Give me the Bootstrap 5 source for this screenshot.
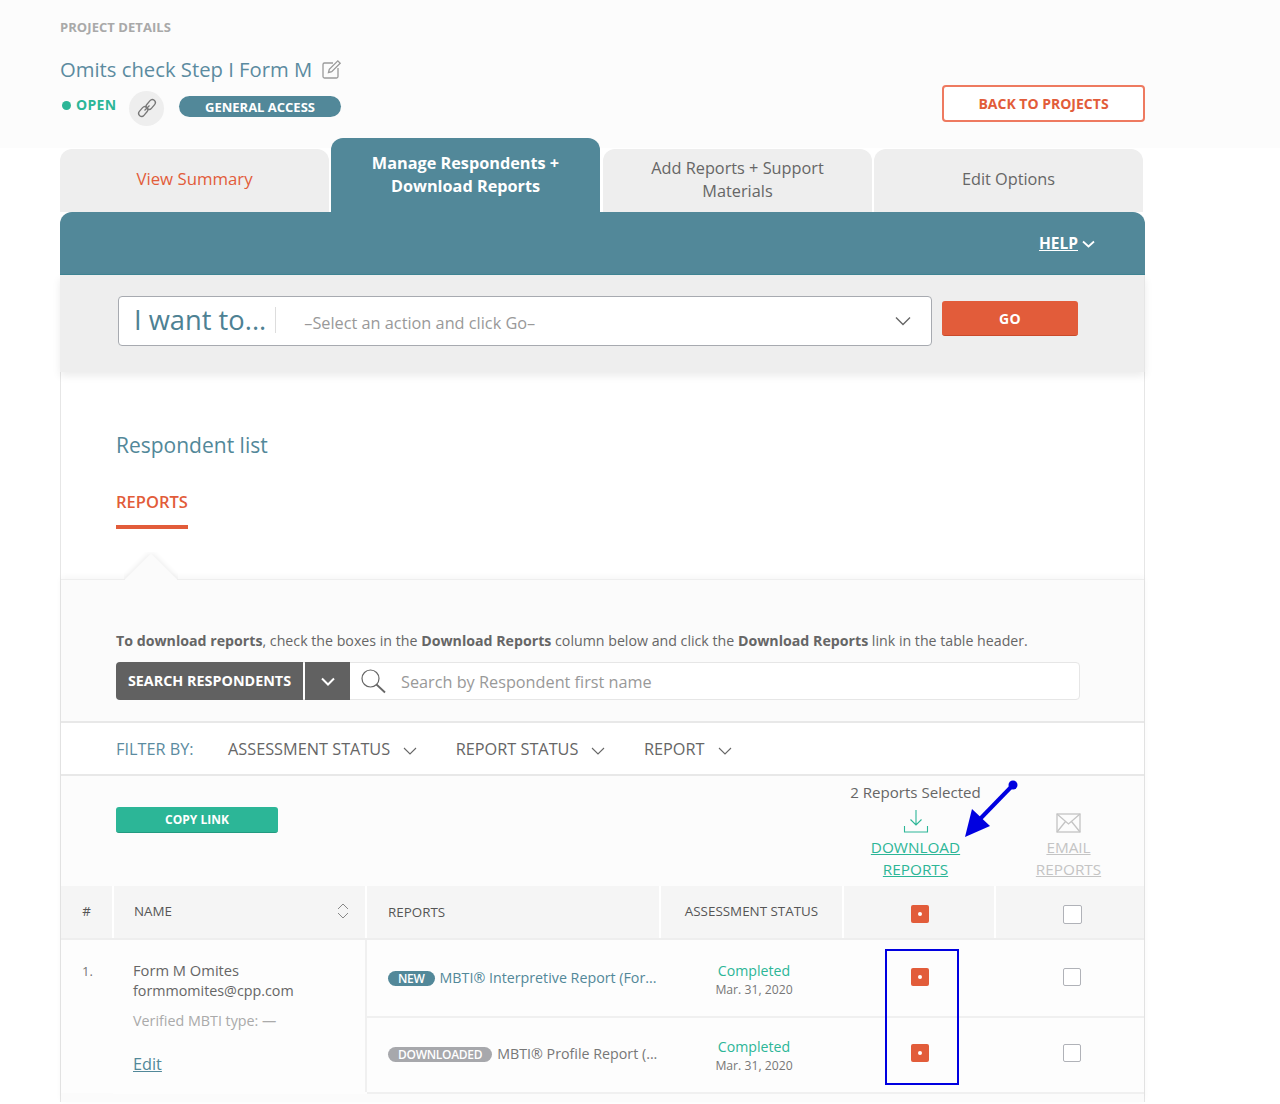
<!DOCTYPE html>
<html lang="en">
<head>
<meta charset="utf-8">
<title>Project details</title>
<link rel="stylesheet" href="https://cdn.jsdelivr.net/npm/bootstrap@5.3.0/dist/css/bootstrap.min.css">
<style>
html,body{height:1104px;overflow:hidden;background:#fff}
body{font-family:"Open Sans","Liberation Sans",sans-serif;color:#555;font-size:14px;position:relative}
.hdr{background:#fcfcfc;height:148px;padding:19px 135px 0 60px}
.eyebrow{font-size:13px;font-weight:700;color:#a9a9a9;line-height:16px;height:16px;margin:0;letter-spacing:.06px}
.ptitle{font-size:20.250px;font-weight:400;color:#5b8ba0;line-height:28px;margin:20px 0 0;height:28px}
.ptitle svg{margin-left:4px;vertical-align:-3px}
.statusrow{margin-top:7px;height:36px}
.open-dot{width:9px;height:9px;border-radius:50%;background:#2cb697;margin:0 5px 6px 2px}
.open-t{font-size:14px;font-weight:700;color:#2cb697;letter-spacing:.3px;line-height:1;margin:0 14px 6px 0;width:39px;white-space:nowrap}
.linkc{width:35px;height:35px;border-radius:50%;background:#eee;margin-right:15px}
.gen{width:162px;height:21px;border-radius:11px;background:#528899;color:#fff;font-size:13px;font-weight:700;line-height:22px;text-align:center;margin-bottom:4px}
.backbtn{width:203px;height:37px;border:2px solid #ee7a60;border-radius:4px;background:#fff;color:#e25c3a;font-size:14px;font-weight:700;line-height:33px;text-align:center;padding:0;margin-bottom:26px}
.wrapx{width:1085px;margin-left:60px;position:relative}
.tabsx{height:74px;margin-top:-10px;align-items:flex-end;gap:2px}
.tabx{width:269px;height:63px;background:#eee;border-radius:12px 12px 0 0;font-size:16.300px;line-height:23px;color:#666;text-align:center;padding:0 30px 2px}
.tabx.first{color:#e25c3a;font-size:16.800px;padding-bottom:4px}
.tabx.actv{height:74px;background:#528899;color:#fff;font-weight:700;padding:0 30px 1px;font-size:16.250px}
.tabx.third{margin-left:1px;width:269px}
.tealbar{height:63px;background:#528899;border-radius:12px 12px 0 0;border-bottom:1px solid #3f8594;padding:1px 50px 0 0}
.helpx{color:#fff;font-weight:700;font-size:15.500px;text-decoration:underline}
.actionbar{height:97px;background:#eee;padding:21px 0 0 58px;box-shadow:0 4px 8px rgba(0,0,0,.08);position:relative;gap:10px;border-right:1px solid #e6e6e6}
.wantbox{width:814px;height:50px;background:#fff;border:1px solid #a7aab0;border-radius:4px;padding:0 20px 0 15px}
.want{font-size:27.300px;color:#4d8193;line-height:26px;padding-right:9px;border-right:1px solid #ddd;height:26px;white-space:nowrap;margin-right:28px;margin-top:-2px}
.wantsel{font-size:16.300px;color:#999;flex:1;position:relative;top:2px}
.gobtn{width:136px;height:35px;margin-top:5px;background:#e25c3a;border:0;border-bottom:1px solid #c94a2a;border-radius:3px;color:#fff;font-weight:700;font-size:14px;letter-spacing:.3px;padding:0}
.panel{border-left:1px solid #e6e6e6;border-right:1px solid #e6e6e6;background:#fff;height:730px}
.toppane{height:207px;padding:59px 0 0 55px}
.rlist{font-size:21px;font-weight:400;color:#528899;line-height:28px;margin:0}
.subtab{display:inline-block;color:#e25c3a;font-weight:600;font-size:16.500px;line-height:20px;margin-top:33px;padding-bottom:13px;border-bottom:4px solid #e25c3a}
.inner{background:#fbfbfb;border-top:1px solid #eee;box-shadow:0 -2px 6px rgba(0,0,0,.04);position:relative;height:523px}
.notch{position:absolute;left:63px;top:-28px;width:54px;height:28px;overflow:hidden}
.notch::after{content:"";position:absolute;left:8px;top:9px;width:38px;height:38px;background:#fbfbfb;transform:rotate(45deg);box-shadow:0 0 6px rgba(0,0,0,.1)}
.instr{padding:51px 0 0 55px;font-size:14.200px;line-height:19px;color:#666;height:82px;margin:0;white-space:nowrap}
.searchrow{margin:0 64px 0 55px;height:38px;background:#fff;border:1px solid #e6e6e6;border-radius:4px}
.srchbtn{width:187px;background:#616161;color:#fff;font-weight:700;font-size:14.350px;line-height:38px;text-align:center;border-radius:4px 0 0 4px;margin:-1px 0 -1px -1px;white-space:nowrap}
.srchcar{width:45px;background:#616161;margin:-1px 0 -1px 2px}
.srchico{margin-left:9px}
.srchtxt{font-size:16.250px;color:#999;margin-left:14px;padding-top:2px}
.filterrow{margin-top:21px;height:55px;background:#fff;border-top:2px solid #e8e8e8;border-bottom:2px solid #e8e8e8;padding:2px 0 0 55px;font-size:16.300px;line-height:1}
.fby{color:#5b8ba0;width:112px}
.fitem{color:#666;white-space:nowrap;margin-right:38.500px}
.fitem svg{margin-left:13px}
.toolrow{height:110px;background:#fcfcfc;position:relative}
.copybtn{position:absolute;left:55px;top:31px;width:162px;height:26px;background:#2cb697;border:0;border-bottom:1px solid #229a80;border-radius:3px;color:#fff;font-size:12px;font-weight:700;padding:0}
.dlwrap{margin-left:auto;display:flex;padding-top:5px}
.dlg{width:152px;text-align:center;font-size:15.300px;line-height:22px;margin-right:3px}
.dlg a{color:#2cb697;text-decoration:underline;display:block}
.emg{width:148px;text-align:center;font-size:15.300px;line-height:22px;margin-right:1.500px}
.emg a{color:#c4c4c4;text-decoration:underline;display:block}
.selt{font-size:15.100px;color:#666;line-height:22px;height:22px;white-space:nowrap}
.icoarea{height:33px;display:flex;align-items:flex-end;justify-content:center;padding-bottom:3px}
table.rtbl{table-layout:fixed;width:1083px;margin:0;border-collapse:collapse}
.rtbl th{background:#f5f5f5;font-weight:400;color:#555;font-size:13.400px;height:53px;padding:0;vertical-align:middle;border-bottom:2px solid #eee;border-right:2px solid #fff}
.rtbl th:last-child{border-right:0}
.rtbl td{padding:0;vertical-align:middle;background:#fdfdfd;border-bottom:2px solid #f0f0f0}
.rtbl th.thchk{padding-top:4px}
.rtbl th.thup{padding-bottom:1px}
.rtbl td.tdchk{padding-bottom:3px}
.rtbl td.tdchk2{padding-bottom:4px}
.rtbl td.tdrep2{padding-bottom:2px}
.rtbl td.stc{padding:3px 0 0 5px}
.rtbl td.stc2{padding:1px 0 0 5px}
.numc{font-size:13px;color:#777;padding:22px 0 0 21px!important;vertical-align:top!important;border-bottom:0!important}
.namec{vertical-align:top!important;padding:20px 0 0 20px!important;border-right:2px solid #f0f0f0;border-bottom:2px solid #fdfdfd!important;line-height:20px;color:#666;font-size:14.300px}
.nmx{font-size:14.700px}
.vmbti{color:#aaa;margin-top:10px}
.editl{color:#528899;font-size:16.300px;display:inline-block;margin-top:23px}
.bdg{display:inline-block;border-radius:8px;color:#fff;font-size:12px;font-weight:600;line-height:15px;padding:0 10px;margin:0 5px 0 21px;letter-spacing:-.3px}
.bnew{background:#528899}
.bdl{background:#a7a8ac}
.repl{font-size:14.250px;color:#528899}
.repg{font-size:14.250px;color:#777}
.stc{text-align:center;line-height:19px}
.stc b{display:block;font-weight:400;color:#2cb697;font-size:14.150px}
.stc span{display:block;font-size:12.200px;color:#777}
.chk{width:18px;height:18px;border-radius:2px;display:block;margin:0 auto}
.chk.on{background:#e25c3a;position:relative;left:1px}
.chk.on::after{content:"";position:absolute;left:7px;top:7px;width:4px;height:4px;border-radius:50%;background:#fff}
.chk.off{border:1.500px solid #b0b2b8;background:#fff;margin-left:68px}
.chk.off.big{width:19px;height:19px;margin-left:67px}
.annot{position:absolute;pointer-events:none}
.bluebox{left:885px;top:949px;width:74px;height:136px;border:2px solid #0000e0}
</style>
</head>
<body>
<div class="hdr d-flex justify-content-between align-items-end">
  <div class="align-self-start">
    <p class="eyebrow">PROJECT DETAILS</p>
    <h1 class="ptitle">Omits check Step I Form M
      <svg width="21" height="21" viewBox="0 0 21 21" fill="none" stroke="#9a9a9a" stroke-width="1.300"><path d="M12 4H3.500A1.500 1.500 0 0 0 2 5.500V17.500A1.500 1.500 0 0 0 3.500 19H15.500A1.500 1.500 0 0 0 17 17.500V9"/><path d="M7.500 13.500 8.300 10.300 16.800 1.800 19.200 4.200 10.700 12.700Z"/></svg>
    </h1>
    <div class="statusrow d-flex align-items-center">
      <span class="open-dot"></span><span class="open-t">OPEN</span>
      <span class="linkc d-flex align-items-center justify-content-center">
        <svg width="24" height="24" viewBox="0 0 24 24" fill="none" stroke="#777" stroke-width="1.300"><rect x="-3.500" y="-3" width="11" height="6" rx="3" transform="translate(7 17) rotate(-50)"/><rect x="-7.500" y="-3" width="11" height="6" rx="3" transform="translate(17 7) rotate(-50)"/><path d="M9.500 14.500 14.500 9.500"/></svg>
      </span>
      <span class="gen">GENERAL ACCESS</span>
    </div>
  </div>
  <button class="backbtn" type="button">BACK TO PROJECTS</button>
</div>

<div class="wrapx">
  <div class="d-flex tabsx">
    <div class="tabx first d-flex align-items-center justify-content-center">View Summary</div>
    <div class="tabx actv d-flex align-items-center justify-content-center">Manage Respondents + Download Reports</div>
    <div class="tabx third d-flex align-items-center justify-content-center">Add Reports + Support Materials</div>
    <div class="tabx d-flex align-items-center justify-content-center">Edit Options</div>
  </div>
  <div class="tealbar d-flex align-items-center justify-content-end">
    <a class="helpx" href="#">HELP</a>
    <svg class="ms-1" width="13" height="8" viewBox="0 0 13 8" fill="none" stroke="#fff" stroke-width="1.800"><path d="M1 1.500 6.500 6.500 12 1.500"/></svg>
  </div>
  <div class="actionbar d-flex align-items-start">
    <div class="wantbox d-flex align-items-center">
      <span class="want">I want to...</span>
      <span class="wantsel">–Select an action and click Go–</span>
      <svg width="16" height="10" viewBox="0 0 16 10" fill="none" stroke="#666" stroke-width="1.400"><path d="M1 1.500 8 8.500 15 1.500"/></svg>
    </div>
    <button class="gobtn" type="button">GO</button>
  </div>
  <div class="panel">
    <div class="toppane">
      <h2 class="rlist">Respondent list</h2>
      <span class="subtab">REPORTS</span>
    </div>
    <div class="inner">
      <div class="notch"></div>
      <p class="instr"><b>To download reports</b>, check the boxes in the <b>Download Reports</b> column below and click the <b>Download Reports</b> link in the table header.</p>
      <div class="searchrow d-flex align-items-center">
        <span class="srchbtn">SEARCH RESPONDENTS</span>
        <span class="srchcar d-flex align-items-center justify-content-center align-self-stretch">
          <svg width="14" height="9" viewBox="0 0 14 9" fill="none" stroke="#fff" stroke-width="2"><path d="M1 1.500 7 7.500 13 1.500"/></svg>
        </span>
        <svg class="srchico" width="28" height="28" viewBox="0 0 28 28" fill="none" stroke="#666" stroke-width="1.200"><circle cx="11.500" cy="11.500" r="8.500"/><path d="M17.500 17.500 26 25.500" stroke-width="1.800"/></svg>
        <span class="srchtxt">Search by Respondent first name</span>
      </div>
      <div class="filterrow d-flex align-items-center">
        <span class="fby">FILTER BY:</span>
        <span class="fitem">ASSESSMENT STATUS<svg width="14" height="8" viewBox="0 0 14 8" fill="none" stroke="#666" stroke-width="1.100"><path d="M1 1 7 7 13 1"/></svg></span>
        <span class="fitem">REPORT STATUS<svg width="14" height="8" viewBox="0 0 14 8" fill="none" stroke="#666" stroke-width="1.100"><path d="M1 1 7 7 13 1"/></svg></span>
        <span class="fitem">REPORT<svg width="14" height="8" viewBox="0 0 14 8" fill="none" stroke="#666" stroke-width="1.100"><path d="M1 1 7 7 13 1"/></svg></span>
      </div>
      <div class="toolrow d-flex">
        <button class="copybtn" type="button">COPY LINK</button>
        <div class="dlwrap">
          <div class="dlg">
            <div class="selt">2 Reports Selected</div>
            <div class="icoarea"><svg width="26" height="24" viewBox="0 0 26 24" fill="none" stroke="#2cb697" stroke-width="1.100"><path d="M13 1V16M7.500 10.500 13 16 18.500 10.500"/><path d="M1.500 17V23H24.500V17"/></svg></div>
            <a href="#">DOWNLOAD<br>REPORTS</a>
          </div>
          <div class="emg">
            <div class="selt"></div>
            <div class="icoarea"><svg width="25" height="20" viewBox="0 0 25 20" fill="none" stroke="#c4c4c4" stroke-width="1.300"><rect x="1" y="1" width="23" height="18"/><path d="M1 1 12.500 11 24 1M1 19 9.500 8.500M24 19 15.500 8.500"/></svg></div>
            <a href="#">EMAIL<br>REPORTS</a>
          </div>
        </div>
      </div>
      <table class="rtbl">
        <colgroup><col style="width:52px"><col style="width:253px"><col style="width:294px"><col style="width:183px"><col style="width:152px"><col style="width:149px"></colgroup>
        <thead><tr>
          <th class="text-center thup">#</th>
          <th class="thup"><div class="d-flex justify-content-between align-items-center ps-4 pe-3"><span style="margin-left:-4px">NAME</span><svg width="12" height="16" viewBox="0 0 12 16" fill="none" stroke="#888"><path d="M1 6 6 1 11 6M1 10 6 15 11 10"/></svg></div></th>
          <th><span class="ps-4" style="margin-left:-3px">REPORTS</span></th>
          <th class="text-center thup">ASSESSMENT STATUS</th>
          <th class="thchk"><span class="chk on"></span></th>
          <th class="thchk"><span class="chk off big"></span></th>
        </tr></thead>
        <tbody>
          <tr style="height:78px">
            <td class="numc" rowspan="2">1.</td>
            <td class="namec" rowspan="2"><span class="nmx">Form M Omites</span><br>formmomites@cpp.com<div class="vmbti">Verified MBTI type: —</div><a class="editl" href="#">Edit</a></td>
            <td><span class="bdg bnew">NEW</span><a class="repl text-decoration-none" href="#">MBTI® Interpretive Report (For...</a></td>
            <td class="stc"><b>Completed</b><span>Mar. 31, 2020</span></td>
            <td class="tdchk"><span class="chk on"></span></td>
            <td class="tdchk"><span class="chk off"></span></td>
          </tr>
          <tr style="height:76px">
            <td class="tdrep2"><span class="bdg bdl">DOWNLOADED</span><span class="repg">MBTI® Profile Report (...</span></td>
            <td class="stc stc2"><b>Completed</b><span>Mar. 31, 2020</span></td>
            <td class="tdchk tdchk2"><span class="chk on"></span></td>
            <td class="tdchk tdchk2"><span class="chk off"></span></td>
          </tr>
        </tbody>
      </table>
    </div>
  </div>
</div>

<div class="annot bluebox"></div>
<svg class="annot" style="left:960px;top:776px" width="64" height="64" viewBox="0 0 64 64"><circle cx="53" cy="9" r="4.500" fill="#0000e0"/><path d="M53 9 20 43" stroke="#0000e0" stroke-width="4" fill="none"/><path d="M5 61 12 33 30 50Z" fill="#0000e0"/></svg>
</body>
</html>
